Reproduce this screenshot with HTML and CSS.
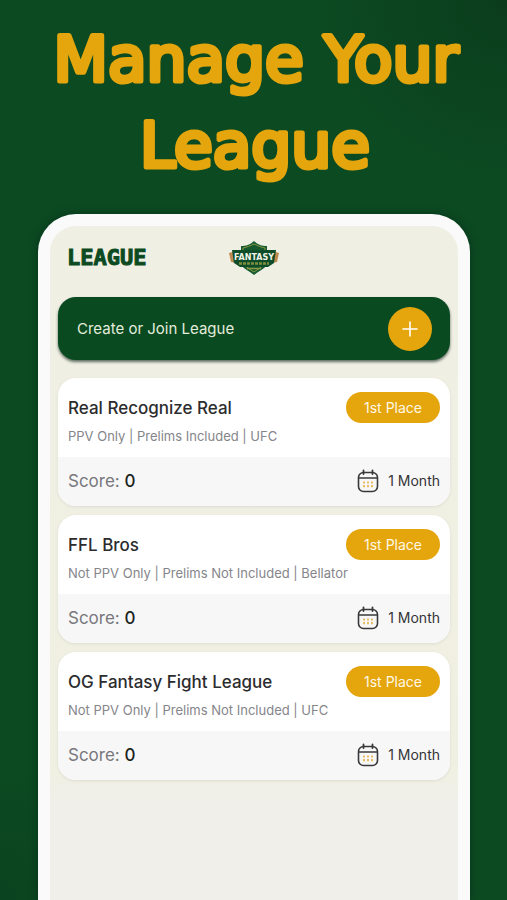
FILE: index.html
```html
<!DOCTYPE html>
<html lang="en">
<head>
<meta charset="utf-8">
<meta name="viewport" content="width=device-width, initial-scale=1">
<title>Manage Your League</title>
<link rel="stylesheet" href="styles.css">
</head>
<body>
<svg class="defs" aria-hidden="true">
  <symbol id="calendar" viewBox="0 0 22 24">
    <rect x="1.500" y="3.500" width="19" height="19" rx="5" fill="none" stroke="#38383a" stroke-width="1.6"/>
    <path d="M2 9H20" stroke="#38383a" stroke-width="1.4"/>
    <path d="M6.5 1.500V5M15.5 1.500V5" stroke="#38383a" stroke-width="1.8" stroke-linecap="round"/>
    <path d="M6 13.500h2M10 13.500h2M14 13.500h2M6 17.200h2M10 17.200h2M14 17.200h2" stroke="#e9bd63" stroke-width="2.200"/>
  </symbol>
</svg>
<h1 class="headline">
  <svg class="headline-art" viewBox="0 0 507 200">
    <text x="256" y="81">Manage Your</text>
    <text x="255" y="167">League</text>
  </svg>
</h1>
<main class="phone">
  <div class="screen">
    <header class="topbar">
      <h2 class="wordmark">LEAGUE</h2>
      <svg class="logo" viewBox="0 0 50 34" role="img" aria-label="Fantasy">
        <path d="M0 12l7-2v12l-5-1z" fill="#bd8a50"/>
        <path d="M50 12l-7-2v12l5-1z" fill="#bd8a50"/>
        <path d="M25 0c4 4 8 5 13 5v19c-3 4-8 6-13 10-5-4-10-6-13-10V5c5 0 9-1 13-5z" fill="#155c32"/>
        <path d="M25 3c4 2 7 3 11 4v16c-3 3-7 5-11 8-4-3-8-5-11-8V7c4-1 7-2 11-4z" fill="#17592f" stroke="#8a9740" stroke-width="1"/>
        <path d="M3 9h44l-2 13-6 4H11l-6-4z" fill="#0f4c2a"/>
        <path d="M10 22.500h30" stroke="#7f8e3b" stroke-width="2.500" stroke-dasharray="3 1"/>
        <path d="M18 27.500h14" stroke="#8a9740" stroke-width="1.500"/>
        <text x="25" y="19" class="logo-text">FANTASY</text>
      </svg>
    </header>
    <section class="create">
      <span class="create-label" id="create-label">Create or Join League</span>
      <button class="add" type="button" aria-labelledby="create-label">
        <svg class="plus" viewBox="0 0 16 16" aria-hidden="true"><path d="M8 1v14M1 8h14" stroke="#fff" stroke-width="1.600" stroke-linecap="round"/></svg>
      </button>
    </section>
    <section class="leagues">
      <article class="card">
        <div class="summary">
          <div class="title-row"><h3 class="name">Real Recognize Real</h3><span class="place">1st Place</span></div>
          <p class="rules">PPV Only | Prelims Included | UFC</p>
        </div>
        <div class="details">
          <p class="score">Score: <b>0</b></p>
          <p class="term"><svg class="calendar" aria-hidden="true"><use href="#calendar"/></svg>1 Month</p>
        </div>
      </article>
      <article class="card">
        <div class="summary">
          <div class="title-row"><h3 class="name">FFL Bros</h3><span class="place">1st Place</span></div>
          <p class="rules">Not PPV Only | Prelims Not Included | Bellator</p>
        </div>
        <div class="details">
          <p class="score">Score: <b>0</b></p>
          <p class="term"><svg class="calendar" aria-hidden="true"><use href="#calendar"/></svg>1 Month</p>
        </div>
      </article>
      <article class="card">
        <div class="summary">
          <div class="title-row"><h3 class="name">OG Fantasy Fight League</h3><span class="place">1st Place</span></div>
          <p class="rules">Not PPV Only | Prelims Not Included | UFC</p>
        </div>
        <div class="details">
          <p class="score">Score: <b>0</b></p>
          <p class="term"><svg class="calendar" aria-hidden="true"><use href="#calendar"/></svg>1 Month</p>
        </div>
      </article>
    </section>
  </div>
</main>
</body>
</html>
```
FILE: styles.css
```css
* { box-sizing: border-box; }
h1, h2, h3, p { margin: 0; }
body {
  margin: 0;
  min-height: 100vh;
  display: flex;
  flex-direction: column;
  font-family: Inter, sans-serif;
  background:
    radial-gradient(ellipse 190px 180px at 100% 0, #0b3d1c, transparent),
    radial-gradient(ellipse 120px 130px at 0 100%, #0a431f, transparent),
    #0c4a22;
}
.defs { display: none; }
.headline { padding-bottom: 14px; }
.headline-art { display: block; width: 100%; }
.headline-art text {
  font-family: "DejaVu Sans", sans-serif;
  font-size: 63px;
  font-weight: 400;
  text-anchor: middle;
  fill: #e5a50d;
  stroke: #e5a50d;
  stroke-width: 5px;
  stroke-linejoin: round;
}
.phone {
  flex: 1;
  display: flex;
  margin: 0 37px 0 38px;
  padding: 12px 12px 0;
  border-radius: 38px 38px 0 0;
  background: #fafafb;
  box-shadow: 0 0 8px #06351a;
}
.screen {
  flex: 1;
  min-width: 0;
  padding: 0 8px;
  border-radius: 26px 26px 0 0;
  background: linear-gradient(#f0efe4 0, #f0f0e2 540px, #f0efea 580px);
}
.topbar {
  display: grid;
  grid-template-columns: 1fr 50px 1fr;
  align-items: center;
  height: 71px;
  padding: 0 9px 8px;
}
.wordmark {
  color: #0c4a22;
  font-family: "DejaVu Sans Mono", monospace;
  font-size: 22px;
  font-weight: 700;
  line-height: 24px;
  -webkit-text-stroke: 1px #0c4a22;
}
.logo { width: 50px; height: 34px; }
.logo-text {
  font-family: "DejaVu Sans", sans-serif;
  font-size: 8px;
  font-weight: 700;
  text-anchor: middle;
  fill: #f0f4e8;
}
.create {
  display: flex;
  align-items: center;
  justify-content: space-between;
  height: 63px;
  margin-bottom: 18px;
  padding: 0 18px 0 19px;
  border-radius: 18px;
  background: #0a4a20;
  color: #e3eddc;
  font-size: 15px;
  box-shadow: 0 2px 3px #5d6c61;
}
.add {
  display: grid;
  place-items: center;
  width: 44px;
  height: 44px;
  padding: 0;
  border: 0;
  border-radius: 50%;
  background: #e5a50d;
}
.plus { width: 16px; height: 16px; }
.leagues { display: grid; gap: 9px; }
.card {
  overflow: hidden;
  border-radius: 18px;
  background: #fff;
  box-shadow: 0 1px 3px #dcdcd0;
}
.summary { height: 79px; padding: 14px 10px 0; }
.title-row { display: flex; align-items: center; justify-content: space-between; }
.name { color: #2c2c2e; font-size: 17px; font-weight: 500; line-height: 24px; }
.place {
  padding: 0 18px;
  border-radius: 16px;
  background: #e5a50d;
  color: #fff8e6;
  font-size: 14px;
  line-height: 31px;
}
.rules { margin-top: 3px; color: #85858a; font-size: 13px; line-height: 20px; }
.details {
  display: flex;
  align-items: center;
  justify-content: space-between;
  height: 49px;
  padding: 0 10px 2px;
  background: #f8f7f8;
}
.score { color: #77777c; font-size: 17px; }
.score b { color: #1c2420; font-weight: 500; }
.term { display: flex; align-items: center; gap: 9px; color: #343436; font-size: 14px; }
.calendar { width: 22px; height: 24px; }
```
